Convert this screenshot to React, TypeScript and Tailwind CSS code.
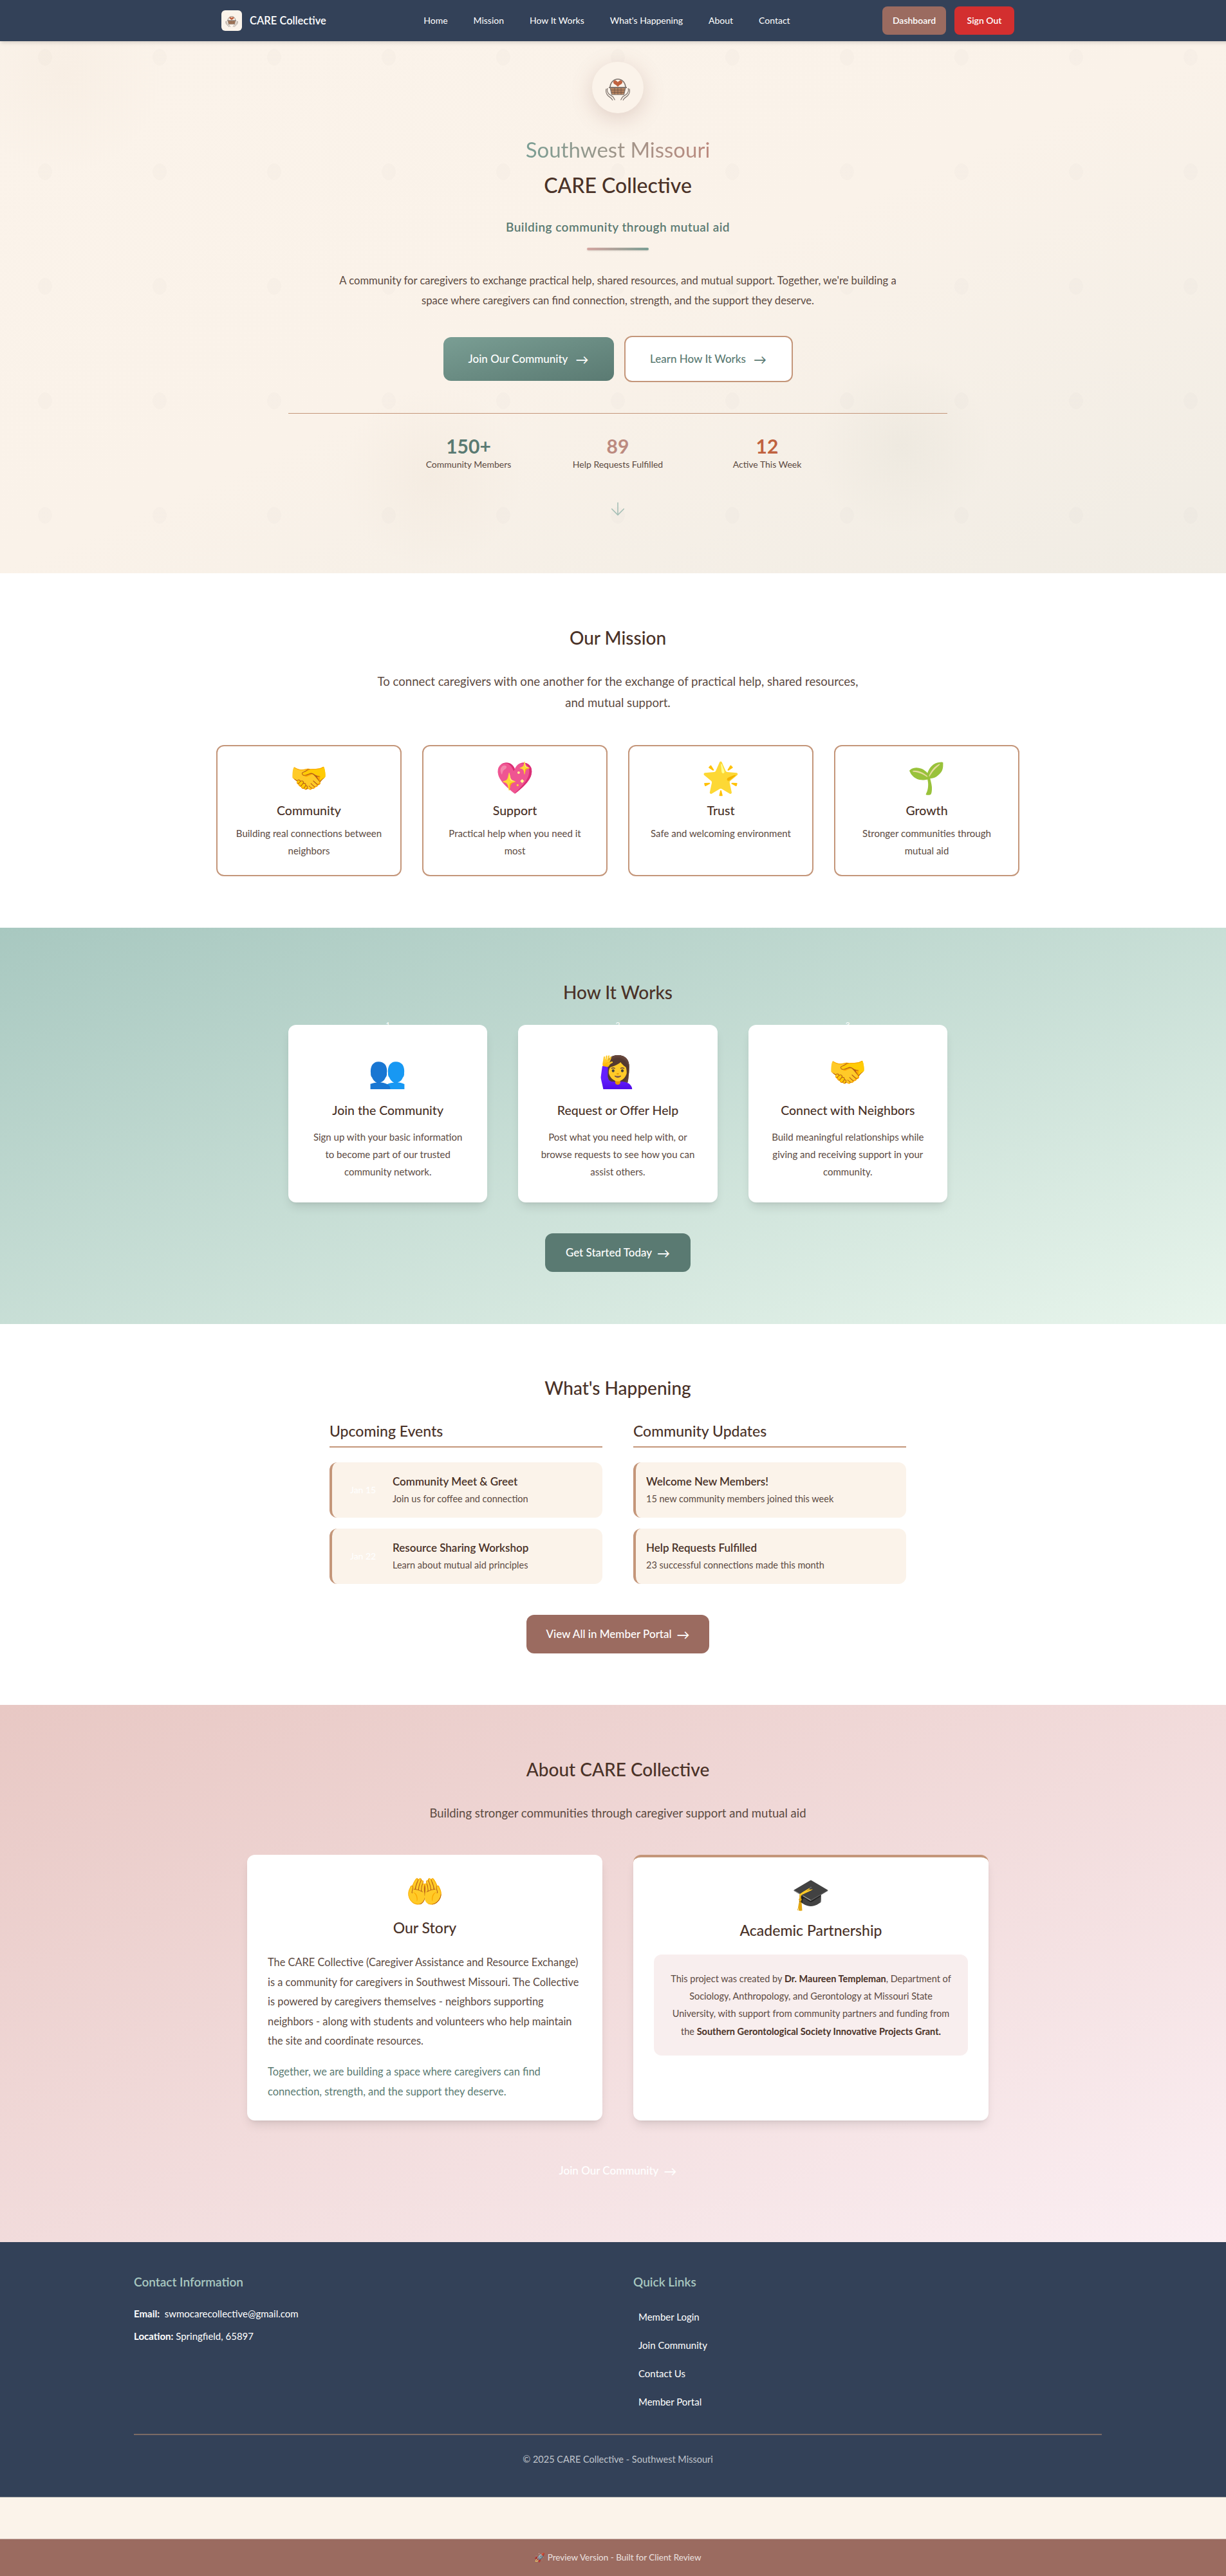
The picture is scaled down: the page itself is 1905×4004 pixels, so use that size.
import { ArrowDown } from "lucide-react";

const font = { fontFamily: "Lato, 'Noto Color Emoji', sans-serif" };

const BasketLogo = ({ className }: { className: string }) => (
  <svg viewBox="0 0 48 48" className={className} fill="none">
    <path d="M12 24a12 13 0 0 1 24 0" stroke="#7d726b" strokeWidth="1.6" />
    <path
      d="M24 23c-1-1-2-2.600-4-3.400-2-1-3.400-2.600-3-4.400.4-1.800 2.200-2.600 3.800-2 1.400.4 2.400 1.400 3.200 2.600.8-1.200 1.800-2.200 3.200-2.600 1.600-.6 3.400.2 3.800 2 .4 1.800-1 3.400-3 4.400-2 .8-3 2.400-4 3.400z"
      fill="#c0623f"
    />
    <path d="M12 24h24l-2.500 11h-19z" fill="#b5835f" stroke="#7d726b" strokeWidth="1.2" />
    <path d="M13 28h22M14 31.500h20M19 24v11M24 24v11M29 24v11" stroke="#6e5345" strokeWidth=".8" />
    <path d="M10 24h28" stroke="#7d726b" strokeWidth="1.800" />
    <path
      d="M8 25c-1 3 0 7 2.500 9.500l6 4 3 5M6 26c-1 4 0 8 3 11l5 4 2 3"
      stroke="#7d726b"
      strokeWidth="1.200"
    />
    <path
      d="M40 25c1 3 0 7-2.500 9.500l-6 4-3 5M42 26c1 4 0 8-3 11l-5 4-2 3"
      stroke="#7d726b"
      strokeWidth="1.200"
    />
  </svg>
);

const Arrow = () => <span className="text-xl leading-none">→</span>;

const navLinks = ["Home", "Mission", "How It Works", "What's Happening", "About", "Contact"];

const missionCards = [
  { icon: "🤝", title: "Community", text: "Building real connections between neighbors" },
  { icon: "💖", title: "Support", text: "Practical help when you need it most" },
  { icon: "🌟", title: "Trust", text: "Safe and welcoming environment" },
  { icon: "🌱", title: "Growth", text: "Stronger communities through mutual aid" },
];

const steps = [
  {
    n: "1",
    icon: "👥",
    title: "Join the Community",
    text: "Sign up with your basic information to become part of our trusted community network.",
  },
  {
    n: "2",
    icon: "🙋‍♀️",
    title: "Request or Offer Help",
    text: "Post what you need help with, or browse requests to see how you can assist others.",
  },
  {
    n: "3",
    icon: "🤝",
    title: "Connect with Neighbors",
    text: "Build meaningful relationships while giving and receiving support in your community.",
  },
];

const events = [
  { date: "Jan 15", title: "Community Meet & Greet", text: "Join us for coffee and connection" },
  { date: "Jan 22", title: "Resource Sharing Workshop", text: "Learn about mutual aid principles" },
];

const updates = [
  { title: "Welcome New Members!", text: "15 new community members joined this week" },
  { title: "Help Requests Fulfilled", text: "23 successful connections made this month" },
];

const footerLinks = ["Member Login", "Join Community", "Contact Us", "Member Portal"];

export default function App() {
  return (
    <div className="w-full overflow-hidden text-[#4a3228]" style={font}>
      <div className="w-[1920px]">
        {/* Nav */}
        <nav className="relative z-10 h-16 bg-[#334158] shadow-md">
          <div className="mx-auto flex h-16 w-[1232px] items-center justify-between">
            <div className="flex items-center gap-3">
              <div className="flex h-8 w-8 items-center justify-center rounded-md bg-[#fbf3ea]">
                <BasketLogo className="h-6 w-6" />
              </div>
              <span className="text-[16.5px] font-semibold text-white">CARE Collective</span>
            </div>
            <div className="ml-2 flex items-center gap-10 text-sm text-white">
              {navLinks.map((l) => (
                <a key={l}>{l}</a>
              ))}
            </div>
            <div className="flex items-center gap-[13px] text-sm font-semibold text-white">
              <a className="flex h-11 w-[99px] items-center justify-center rounded-lg bg-[#9b6b60]">Dashboard</a>
              <a className="flex h-11 w-[93px] items-center justify-center rounded-lg bg-[#d32f2f]">Sign Out</a>
            </div>
          </div>
        </nav>

        {/* Hero */}
        <section className="relative h-[827px] bg-gradient-to-br from-[#fbf3ea] via-[#faf2e9] to-[#f0ece4]">
          <div className="absolute inset-0 bg-[radial-gradient(ellipse_11px_13px_at_center,rgba(120,120,100,0.025)_98%,transparent_100%)] bg-[size:178px_178px] bg-[position:-19px_-64px]" />
          <div className="absolute inset-0 bg-[radial-gradient(circle_at_73%_76%,rgba(150,160,140,0.07),transparent_9%),radial-gradient(circle_at_35%_82%,rgba(190,160,130,0.06),transparent_10%),radial-gradient(circle_at_5%_6%,rgba(190,160,130,0.05),transparent_8%)]" />
          <div className="relative flex flex-col items-center pt-8">
            <div className="flex h-20 w-20 items-center justify-center rounded-full bg-[#fbf3ea] shadow-[0_8px_32px_rgba(155,107,96,0.25)]">
              <BasketLogo className="h-12 w-12" />
            </div>
            <h1 className="mt-7 bg-gradient-to-r from-[#7a9e94] to-[#bc8a7f] bg-clip-text text-[33px] leading-[56px] text-transparent">
              Southwest Missouri
            </h1>
            <h2 className="text-[32px] font-medium leading-[56px] text-[#4a3228]">CARE Collective</h2>
            <p className="mt-[23px] text-[19px] font-semibold leading-7 tracking-wide text-[#5a7a72]">
              Building community through mutual aid
            </p>
            <div className="mt-[18px] h-1 w-24 rounded-sm bg-gradient-to-r from-[#d4a5a0] to-[#7a9e94] shadow-sm" />
            <p className="mt-8 w-[896px] text-center text-[16.6px] leading-[31px] text-[#5c4a42]">
              A community for caregivers to exchange practical help, shared resources, and mutual support. Together,
              we're building a space where caregivers can find connection, strength, and the support they deserve.
            </p>
            <div className="mt-[39px] flex items-center gap-4">
              <a className="flex h-[68px] w-[265px] items-center justify-center gap-3 rounded-xl bg-gradient-to-br from-[#7a9e94] to-[#5a7a72] text-[17px] font-medium text-white">
                Join Our Community <Arrow />
              </a>
              <a className="flex h-[72px] w-[262px] items-center justify-center gap-3 rounded-xl border-2 border-[#c4967a] bg-white text-[17px] font-medium text-[#5a7a72]">
                Learn How It Works <Arrow />
              </a>
            </div>
            <div className="mt-12 w-[1024px] border-t border-[#c4967a] pt-8">
              <div className="mx-auto grid w-[696px] grid-cols-3 text-center">
                <div>
                  <div className="text-3xl font-bold leading-9 text-[#5a7a72]">150+</div>
                  <div className="mt-px text-sm text-[#5c4a42]">Community Members</div>
                </div>
                <div>
                  <div className="text-3xl font-bold leading-9 text-[#bc8a7f]">89</div>
                  <div className="mt-px text-sm text-[#5c4a42]">Help Requests Fulfilled</div>
                </div>
                <div>
                  <div className="text-3xl font-bold leading-9 text-[#c0623f]">12</div>
                  <div className="mt-px text-sm text-[#5c4a42]">Active This Week</div>
                </div>
              </div>
            </div>
            <ArrowDown size={32} strokeWidth={1.2} className="mt-[43px] text-[#a6bfb6]" />
          </div>
        </section>

        {/* Mission */}
        <section className="h-[551px] bg-white pt-[76px] text-center">
          <h2 className="text-[28px] font-medium leading-[48px]">Our Mission</h2>
          <p className="mx-auto mt-7 w-[768px] text-[18.6px] leading-[33px] text-[#5c4a42]">
            To connect caregivers with one another for the exchange of practical help, shared resources, and mutual
            support.
          </p>
          <div className="mx-auto mt-[49px] grid w-[1248px] grid-cols-4 gap-8">
            {missionCards.map((c) => (
              <div key={c.title} className="h-[204px] rounded-xl border-2 border-[#c4967a] bg-white px-6 pt-5">
                <div className="text-5xl leading-[56px]">{c.icon}</div>
                <h3 className="mt-[10px] text-[19.5px] font-medium leading-7">{c.title}</h3>
                <p className="mt-2 text-[15px] leading-[27px] text-[#5c4a42]">{c.text}</p>
              </div>
            ))}
          </div>
        </section>

        {/* How it works */}
        <section className="h-[616px] bg-gradient-to-br from-[#a8c8c0] to-[#e8f5ec] pt-[76px] text-center">
          <h2 className="text-[28px] font-medium leading-[48px]">How It Works</h2>
          <div className="mx-auto mt-[27px] grid w-[1024px] grid-cols-3 gap-12">
            {steps.map((s) => (
              <div key={s.n} className="relative h-[276px] rounded-xl bg-white px-8 pt-11 shadow-lg">
                <span className="absolute -top-[7px] left-0 right-0 text-xs leading-[14px] text-white [clip-path:inset(0_0_7px_0)]">
                  {s.n}
                </span>
                <div className="text-5xl leading-[56px]">{s.icon}</div>
                <h3 className="mt-[19px] text-[19.5px] font-medium leading-7">{s.title}</h3>
                <p className="mt-[14px] text-[15px] leading-[27px] text-[#5c4a42]">{s.text}</p>
              </div>
            ))}
          </div>
          <a className="mx-auto mt-12 flex h-[60px] w-[226px] items-center justify-center gap-2 rounded-xl bg-[#5a7a72] text-[17px] font-medium text-white">
            Get Started Today <Arrow />
          </a>
        </section>

        {/* What's happening */}
        <section className="h-[592px] bg-white pt-[75px]">
          <h2 className="text-center text-[28px] font-medium leading-[48px]">What's Happening</h2>
          <div className="mx-auto mt-[27px] grid w-[896px] grid-cols-2 gap-12">
            <div>
              <h3 className="border-b-2 border-[#c4967a] pb-[8px] text-[23px] font-medium leading-8">Upcoming Events</h3>
              <div className="mt-[23px] flex flex-col gap-[17px]">
                {events.map((e) => (
                  <div
                    key={e.title}
                    className="flex h-[86px] items-center rounded-xl border-l-4 border-[#c4967a] bg-[#fbf3ea] pl-7"
                  >
                    <span className="w-[66px] text-sm text-white">{e.date}</span>
                    <div>
                      <h4 className="text-[17px] font-semibold leading-6">{e.title}</h4>
                      <p className="mt-1 text-[14.5px] text-[#5c4a42]">{e.text}</p>
                    </div>
                  </div>
                ))}
              </div>
            </div>
            <div>
              <h3 className="border-b-2 border-[#c4967a] pb-[8px] text-[23px] font-medium leading-8">Community Updates</h3>
              <div className="mt-[23px] flex flex-col gap-[17px]">
                {updates.map((u) => (
                  <div
                    key={u.title}
                    className="flex h-[86px] flex-col justify-center rounded-xl border-l-4 border-[#c4967a] bg-[#fbf3ea] pl-4"
                  >
                    <h4 className="text-[17px] font-semibold leading-6">{u.title}</h4>
                    <p className="mt-1 text-[14.5px] text-[#5c4a42]">{u.text}</p>
                  </div>
                ))}
              </div>
            </div>
          </div>
          <a className="mx-auto mt-12 flex h-[60px] w-[284px] items-center justify-center gap-2 rounded-xl bg-[#9b6b60] text-[17px] font-medium text-white">
            View All in Member Portal <Arrow />
          </a>
        </section>

        {/* About */}
        <section className="h-[835px] bg-gradient-to-br from-[#e8c8c4] to-[#fbeff3] pt-[76px]">
          <h2 className="text-center text-[28px] font-medium leading-[48px]">About CARE Collective</h2>
          <p className="mt-[30px] text-center text-[18.500px] leading-7 text-[#5c4a42]">
            Building stronger communities through caregiver support and mutual aid
          </p>
          <div className="mx-auto mt-[51px] grid w-[1152px] grid-cols-2 gap-12">
            <div className="h-[413px] rounded-xl bg-white px-8 pt-7 shadow-lg">
              <div className="text-center text-5xl leading-[56px]">🤲</div>
              <h3 className="mt-[13px] text-center text-[23px] font-medium leading-8">Our Story</h3>
              <p className="mt-[23px] text-[16.4px] leading-[30.6px] text-[#5c4a42]">
                The CARE Collective (Caregiver Assistance and Resource Exchange) is a community for caregivers in
                Southwest Missouri. The Collective is powered by caregivers themselves - neighbors supporting neighbors
                - along with students and volunteers who help maintain the site and coordinate resources.
              </p>
              <p className="mt-[17px] text-[16.4px] leading-[30.6px] text-[#5a7a72]">
                Together, we are building a space where caregivers can find connection, strength, and the support they
                deserve.
              </p>
            </div>
            <div className="h-[413px] rounded-xl border-t-4 border-[#c4967a] bg-white px-8 pt-7 shadow-lg">
              <div className="text-center text-5xl leading-[56px]">🎓</div>
              <h3 className="mt-[13px] text-center text-[23px] font-medium leading-8">Academic Partnership</h3>
              <div className="mt-[22px] rounded-xl bg-[#f8eeee] p-6 text-center text-[14.5px] leading-[27.2px] text-[#5c4a42]">
                This project was created by <strong className="text-[#4a3228]">Dr. Maureen Templeman</strong>,
                Department of Sociology, Anthropology, and Gerontology at Missouri State University, with support from
                community partners and funding from the{" "}
                <strong className="text-[#4a3228]">Southern Gerontological Society Innovative Projects Grant.</strong>
              </div>
            </div>
          </div>
          <a className="mx-auto mt-[66px] flex h-6 items-center justify-center gap-2 text-[17px] font-medium text-white">
            Join Our Community <Arrow />
          </a>
        </section>

        {/* Footer */}
        <footer className="h-[397px] border-b border-[#a8a8a8] bg-[#334158] pt-12 text-white">
          <div className="mx-auto w-[1504px]">
            <div className="grid h-[250px] grid-cols-2 gap-12">
              <div>
                <h4 className="text-[19px] font-semibold leading-7 text-[#a8c8c0]">Contact Information</h4>
                <p className="mt-[25px] text-[15px] leading-5">
                  <strong>Email:</strong>&nbsp; swmocarecollective@gmail.com
                </p>
                <p className="mt-[15px] text-[15px] leading-5">
                  <strong>Location:</strong> Springfield, 65897
                </p>
              </div>
              <div>
                <h4 className="text-[19px] font-semibold leading-7 text-[#a8c8c0]">Quick Links</h4>
                <ul className="mt-[30px] flex flex-col gap-6 pl-2 text-[15px] leading-5">
                  {footerLinks.map((l) => (
                    <li key={l}>{l}</li>
                  ))}
                </ul>
              </div>
            </div>
            <div className="border-t-2 border-[#7b6a65] pt-7 text-center text-[14.5px] leading-5 text-white/70">
              © 2025 CARE Collective - Southwest Missouri
            </div>
          </div>
        </footer>
        <div className="h-16 bg-[#fbf3ea]" />

        {/* Preview bar */}
        <div className="flex h-[58px] items-center justify-center border-t border-[#c8b0a8] bg-[#9b6b60] text-[13.5px] text-white/80">
          🚀 Preview Version - Built for Client Review
        </div>
      </div>
    </div>
  );
}
